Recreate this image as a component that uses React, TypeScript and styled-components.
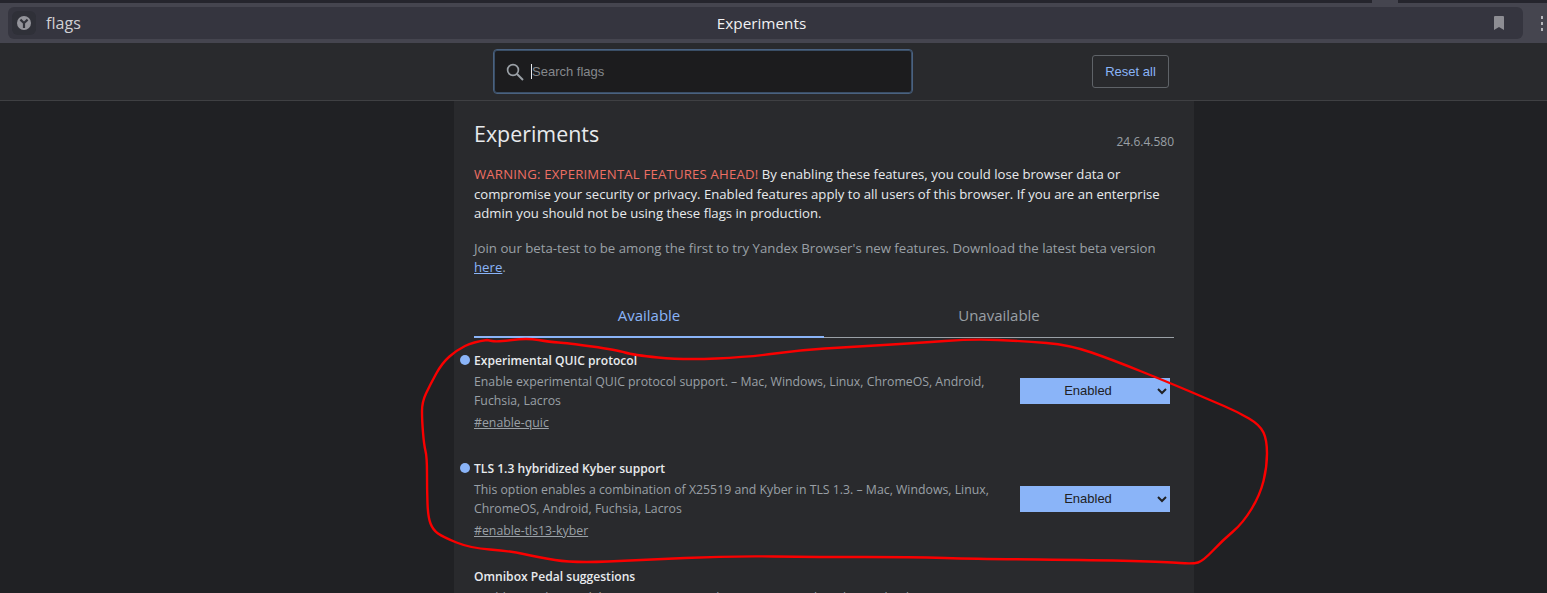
import React from "react";
import styled, { createGlobalStyle } from "styled-components";

const GlobalStyle = createGlobalStyle`
  html, body {
    margin: 0;
    padding: 0;
    background: #202124;
  }
  * { box-sizing: border-box; }
`;

const uiFont = `"Open Sans", "Noto Sans", sans-serif`;
const controlFont = `"Liberation Sans", Arial, sans-serif`;

const flags = [
  {
    id: "quic",
    title: "Experimental QUIC protocol",
    lines: ["Enable experimental QUIC protocol support. – Mac, Windows, Linux, ChromeOS, Android,", "Fuchsia, Lacros"],
    link: "#enable-quic",
    modified: true,
  },
  {
    id: "kyber",
    title: "TLS 1.3 hybridized Kyber support",
    lines: ["This option enables a combination of X25519 and Kyber in TLS 1.3. – Mac, Windows, Linux,", "ChromeOS, Android, Fuchsia, Lacros"],
    link: "#enable-tls13-kyber",
    modified: true,
  },
  {
    id: "pedal",
    title: "Omnibox Pedal suggestions",
    lines: ["Enable omnibox Pedal suggestions to accelerate actions within Chrome by detecting user", "intent and offering direct links to Chrome features."],
    link: "#omnibox-pedal-suggestions",
    modified: false,
  },
];

// hand drawn circle over the two flags, points traced from the picture
const scribble: [number, number][] = [
  [487, 340], [473, 342], [457, 350], [442, 363], [430, 385], [422, 402], [422, 420], [424, 445], [427, 457],
  [427, 490], [428, 517], [433, 530], [443, 537], [470, 548], [510, 551], [537, 557], [573, 563], [643, 560],
  [727, 556], [820, 557], [910, 557], [980, 559], [1097, 560], [1167, 562], [1193, 564], [1203, 561],
  [1223, 540], [1243, 523], [1260, 495], [1267, 467], [1267, 440], [1260, 425], [1238, 412], [1210, 400],
  [1170, 383], [1113, 360], [1070, 345], [1023, 341], [973, 339], [917, 343], [850, 347], [800, 350],
  [750, 357], [683, 360], [633, 355], [617, 350], [567, 343], [550, 342], [527, 338], [497, 342], [487, 340],
];

const scribblePath = () => {
  let d = `M${scribble[0][0]} ${scribble[0][1]}`;
  for (let i = 1; i < scribble.length - 1; i++) {
    const [x, y] = scribble[i];
    const [nx, ny] = scribble[i + 1];
    d += ` Q${x} ${y} ${(x + nx) / 2} ${(y + ny) / 2}`;
  }
  const last = scribble[scribble.length - 1];
  return `${d} L${last[0]} ${last[1]}`;
};

const App: React.FC = () => (
  <Page>
    <GlobalStyle />
    <TabStrip>
      <TabNub />
    </TabStrip>
    <Toolbar>
      <Omnibox>
        <OmniLeft>
          <BrandBadge>
            <svg width="14" height="14" viewBox="0 0 14 14">
              <circle cx="7" cy="7" r="7" fill="#94949b" />
              <path d="M3.4 3.6 L7 7 L10.6 3.6 M7 7 V12" fill="none" stroke="#32333b" strokeWidth="2.2" />
            </svg>
          </BrandBadge>
          <OmniText>flags</OmniText>
        </OmniLeft>
        <PageTitle>Experiments</PageTitle>
        <OmniRight>
          <svg width="10" height="14" viewBox="0 0 10 14">
            <path d="M0 1 Q0 0 1 0 H9 Q10 0 10 1 V14 L5 11 L0 14 Z" fill="#8d8d93" />
          </svg>
        </OmniRight>
      </Omnibox>
      <MenuDots>
        <i />
        <i />
        <i />
      </MenuDots>
    </Toolbar>

    <Header>
      <SearchBox>
        <svg width="18" height="18" viewBox="0 0 18 18">
          <circle cx="7" cy="7" r="5.4" fill="none" stroke="#9aa0a6" strokeWidth="1.7" />
          <path d="M11 11 L17 17" stroke="#9aa0a6" strokeWidth="1.9" />
        </svg>
        <Caret />
        <SearchInput placeholder="Search flags" readOnly />
      </SearchBox>
      <ResetButton>Reset all</ResetButton>
    </Header>

    <Column>
      <TitleRow>
        <Heading>Experiments</Heading>
        <Version>24.6.4.580</Version>
      </TitleRow>
      <Warning>
        <WarnLabel>WARNING: EXPERIMENTAL FEATURES AHEAD!</WarnLabel> By enabling these features, you could lose browser data or
        <br />
        compromise your security or privacy. Enabled features apply to all users of this browser. If you are an enterprise
        <br />
        admin you should not be using these flags in production.
      </Warning>
      <Beta>
        Join our beta-test to be among the first to try Yandex Browser's new features. Download the latest beta version
        <br />
        <BetaLink href="#">here</BetaLink>.
      </Beta>
      <Tabs>
        <TabLabel $active>Available</TabLabel>
        <TabLabel>Unavailable</TabLabel>
      </Tabs>
      <FlagList>
        {flags.map((flag) => (
          <FlagRow key={flag.id}>
            <FlagInfo>
              <FlagTitle $modified={flag.modified}>{flag.title}</FlagTitle>
              <FlagDesc>
                {flag.lines.map((line) => (
                  <div key={line}>{line}</div>
                ))}
              </FlagDesc>
              <FlagLink href="#">{flag.link}</FlagLink>
            </FlagInfo>
            <FlagSelect defaultValue="enabled">
              <option value="default">Default</option>
              <option value="enabled">Enabled</option>
              <option value="disabled">Disabled</option>
            </FlagSelect>
          </FlagRow>
        ))}
      </FlagList>
    </Column>

    <Scribble width="1547" height="593" viewBox="0 0 1547 593">
      <path d={scribblePath()} fill="none" stroke="#fa0000" strokeWidth="2.4" strokeLinecap="round" strokeLinejoin="round" />
    </Scribble>
  </Page>
);

export default App;

const Page = styled.div`
  position: relative;
  width: 1547px;
  height: 593px;
  overflow: hidden;
  background: #202124;
  font-family: ${uiFont};
`;

const TabStrip = styled.div`
  height: 3px;
  background: #25252d;
  display: flex;
  justify-content: flex-end;
  padding-right: 149px;
`;

const TabNub = styled.div`
  width: 26px;
  height: 3px;
  background: #45454f;
`;

const Toolbar = styled.div`
  height: 40px;
  background: #45454f;
  padding: 4px 0 4px 8px;
  display: flex;
  align-items: center;
`;

const Omnibox = styled.div`
  width: 1515px;
  height: 32px;
  background: #35353f;
  border-radius: 6px;
  display: grid;
  grid-template-columns: 1fr auto 1fr;
  align-items: center;
  padding: 0 19px 0 4px;
`;

const OmniLeft = styled.div`
  display: flex;
  align-items: center;
`;

const BrandBadge = styled.div`
  width: 24px;
  height: 24px;
  border-radius: 6px;
  background: #2f3038;
  display: flex;
  align-items: center;
  justify-content: center;
`;

const OmniText = styled.span`
  margin-left: 10px;
  font-size: 16px;
  letter-spacing: 0.05px;
  color: #d0d0d4;
`;

const PageTitle = styled.div`
  margin-left: 7px;
  font-size: 15.3px;
  color: #f1f1f3;
`;

const OmniRight = styled.div`
  display: flex;
  justify-content: flex-end;
  align-items: center;
  height: 14px;
`;

const MenuDots = styled.div`
  margin-left: 18px;
  display: flex;
  flex-direction: column;
  gap: 3px;

  i {
    display: block;
    width: 2px;
    height: 3px;
    background: #b5b5ba;
  }
`;

const Header = styled.div`
  height: 58px;
  background: #292a2d;
  border-bottom: 1px solid #3f4043;
  padding: 6px 0 0 493px;
  display: flex;
  align-items: flex-start;
`;

const SearchBox = styled.div`
  width: 420px;
  height: 45px;
  background: #1c1c1e;
  border: 1px solid #4a6280;
  box-shadow: inset 0 0 0 1px #3a4e66;
  border-radius: 4px;
  padding: 0 0 0 12px;
  display: flex;
  align-items: center;
`;

const Caret = styled.span`
  width: 1px;
  height: 15px;
  margin-left: 7px;
  background: #e8eaed;
`;

const SearchInput = styled.input`
  flex: 1;
  min-width: 0;
  border: 0;
  outline: 0;
  padding: 0;
  background: transparent;
  color: #e8eaed;
  font: 13px ${controlFont};

  &::placeholder {
    color: #85888c;
    opacity: 1;
  }
`;

const ResetButton = styled.button`
  margin: 6px 0 0 179px;
  width: 77px;
  height: 33px;
  padding: 0;
  background: transparent;
  border: 1px solid #5f6368;
  border-radius: 3px;
  color: #8ab4f8;
  font: 13px ${controlFont};
`;

const Column = styled.main`
  margin-left: 454px;
  width: 740px;
  height: 492px;
  background: #292a2d;
  padding: 17px 20px 0;
`;

const TitleRow = styled.div`
  display: flex;
  justify-content: space-between;
  align-items: flex-end;
  height: 32px;
`;

const Heading = styled.h1`
  margin: 0;
  font-size: 21.4px;
  line-height: 32px;
  font-weight: 400;
  color: #e8eaed;
`;

const Version = styled.span`
  font-size: 12px;
  line-height: 18px;
  margin-bottom: -1px;
  color: #9aa0a6;
`;

const Warning = styled.p`
  margin: 15px 0 0;
  font-size: 13.15px;
  line-height: 19.5px;
  color: #e8eaed;
  white-space: nowrap;
`;

const WarnLabel = styled.span`
  color: #ee6f64;
  letter-spacing: 0.2px;
`;

const Beta = styled.p`
  margin: 15px 0 0;
  font-size: 13.23px;
  line-height: 19.5px;
  color: #9aa0a6;
  white-space: nowrap;
`;

const BetaLink = styled.a`
  color: #8ab4f8;
  text-decoration: underline;
`;

const Tabs = styled.div`
  margin-top: 16px;
  display: grid;
  grid-template-columns: 350px 350px;
`;

const TabLabel = styled.div<{ $active?: boolean }>`
  height: 44px;
  line-height: 42px;
  text-align: center;
  font-size: 15px;
  color: ${({ $active }) => ($active ? "#8ab4f8" : "#9aa0a6")};
  border-bottom: ${({ $active }) => ($active ? "2px solid #8ab4f8" : "1px solid #9aa0a6")};
  margin-bottom: ${({ $active }) => ($active ? "0" : "1px")};
`;

const FlagList = styled.div`
  margin-top: 13px;
  display: flex;
  flex-direction: column;
  gap: 28px;
`;

const FlagRow = styled.div`
  display: flex;
  align-items: center;
  justify-content: space-between;
  padding-right: 4px;
`;

const FlagInfo = styled.div`
  display: flex;
  flex-direction: column;
  align-items: flex-start;
`;

const FlagTitle = styled.div<{ $modified?: boolean }>`
  position: relative;
  font-size: 12.1px;
  line-height: 18px;
  font-weight: 600;
  color: #e8eaed;

  &::before {
    content: "";
    display: ${({ $modified }) => ($modified ? "block" : "none")};
    position: absolute;
    left: -14px;
    top: 3px;
    width: 10px;
    height: 10px;
    border-radius: 50%;
    background: #8ab4f8;
  }
`;

const FlagDesc = styled.div`
  margin-top: 2px;
  font-size: 12.3px;
  line-height: 19px;
  color: #9aa0a6;
  white-space: nowrap;
`;

const FlagLink = styled.a`
  margin-top: 3px;
  font-size: 12.3px;
  line-height: 19px;
  color: #9aa0a6;
  text-decoration: underline;
`;

const FlagSelect = styled.select`
  width: 150px;
  height: 26px;
  margin-top: -1px;
  border: 0;
  border-radius: 0;
  padding: 0 2px 2px 0;
  background-color: #8ab4f8;
  color: #202124;
  font: 13px ${controlFont};
  text-align: center;
  text-align-last: center;
`;

const Scribble = styled.svg`
  position: absolute;
  left: 0;
  top: 0;
  pointer-events: none;
`;
